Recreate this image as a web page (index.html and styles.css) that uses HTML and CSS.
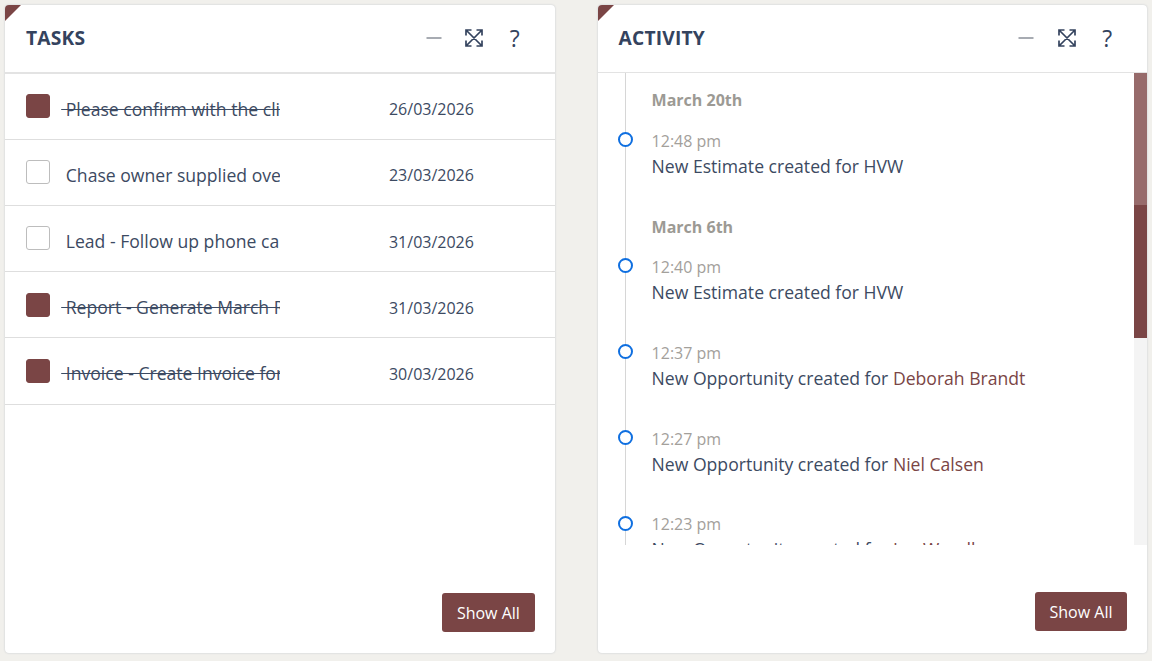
FILE: index.html
```html
<!DOCTYPE html>
<html lang="en">
<head>
    <meta charset="UTF-8">
    <meta name="viewport" content="width=device-width, initial-scale=1.0">
    <title>Dashboard</title>
    <link rel="stylesheet" href="styles.css">
</head>
<body>
    <div class="dashboard">
        <section class="card">
            <span class="corner"></span>
            <header class="card-header card-header-thick">
                <h2>TASKS</h2>
                <div class="tools">
                    <svg class="tool" viewBox="0 0 20 20"><path class="tool-dash" d="M2.500 10H17.500"/></svg>
                    <svg class="tool" viewBox="0 0 20 20"><path d="M2.500 2.500L17.500 17.500M17.500 2.500L2.500 17.500M2 7.500V2H7.500M12.500 2H18V7.500M2 12.500V18H7.500M12.500 18H18V12.500"/></svg>
                    <span class="tool-help">?</span>
                </div>
            </header>
            <ul class="task-list">
                <li class="task task-done">
                    <span class="check"></span>
                    <span class="task-name"><span>&nbsp;Please confirm with the client the details</span></span>
                    <span class="task-date">26/03/2026</span>
                </li>
                <li class="task">
                    <span class="check"></span>
                    <span class="task-name"><span>&nbsp;Chase owner supplied overlay</span></span>
                    <span class="task-date">23/03/2026</span>
                </li>
                <li class="task">
                    <span class="check"></span>
                    <span class="task-name"><span>&nbsp;Lead - Follow up phone call</span></span>
                    <span class="task-date">31/03/2026</span>
                </li>
                <li class="task task-done">
                    <span class="check"></span>
                    <span class="task-name"><span>&nbsp;Report - Generate March Report</span></span>
                    <span class="task-date">31/03/2026</span>
                </li>
                <li class="task task-done">
                    <span class="check"></span>
                    <span class="task-name"><span>&nbsp;Invoice - Create Invoice for March</span></span>
                    <span class="task-date">30/03/2026</span>
                </li>
            </ul>
            <footer class="card-footer"><button class="btn">Show All</button></footer>
        </section>

        <section class="card">
            <span class="corner"></span>
            <header class="card-header">
                <h2>ACTIVITY</h2>
                <div class="tools">
                    <svg class="tool" viewBox="0 0 20 20"><path class="tool-dash" d="M2.500 10H17.500"/></svg>
                    <svg class="tool" viewBox="0 0 20 20"><path d="M2.500 2.500L17.500 17.500M17.500 2.500L2.500 17.500M2 7.500V2H7.500M12.500 2H18V7.500M2 12.500V18H7.500M12.500 18H18V12.500"/></svg>
                    <span class="tool-help">?</span>
                </div>
            </header>
            <div class="activity">
                <div class="timeline">
                    <h3 class="day">March 20th</h3>
                    <div class="event">
                        <div class="time">12:48 pm</div>
                        <div>New Estimate created for HVW</div>
                    </div>
                    <h3 class="day day-next">March 6th</h3>
                    <div class="event">
                        <div class="time">12:40 pm</div>
                        <div>New Estimate created for HVW</div>
                    </div>
                    <div class="event">
                        <div class="time">12:37 pm</div>
                        <div>New Opportunity created for <a href="#">Deborah Brandt</a></div>
                    </div>
                    <div class="event">
                        <div class="time">12:27 pm</div>
                        <div>New Opportunity created for <a href="#">Niel Calsen</a></div>
                    </div>
                    <div class="event">
                        <div class="time">12:23 pm</div>
                        <div>New Opportunity created for <a href="#">Ian Woodley</a></div>
                    </div>
                </div>
                <div class="scrollbar">
                    <div class="thumb-hover"></div>
                    <div class="thumb"></div>
                </div>
            </div>
            <footer class="card-footer"><button class="btn">Show All</button></footer>
        </section>
    </div>
</body>
</html>
```

FILE: styles.css
```css
*, *::before {
    box-sizing: border-box;
}

html, body {
    height: 100%;
}

body {
    margin: 0;
    overflow: hidden;
    background-color: #f1f0ec;
    font-family: "Open Sans", sans-serif;
    font-size: 16px;
    color: #3c4a62;
}

.dashboard {
    display: grid;
    grid-template-columns: 549.6px 549.6px;
    column-gap: 43px;
    padding: 5px 0 0 5px;
}

.card {
    position: relative;
    display: flex;
    flex-direction: column;
    height: 648px;
    background: white;
    border-radius: 4px;
    box-shadow: 0 0 2px rgba(60, 70, 110, 0.25);
    overflow: hidden;
}

.corner {
    position: absolute;
    top: 0;
    left: 0;
    width: 0;
    height: 0;
    border-top: 16px solid #7a4545;
    border-right: 16px solid transparent;
}

.card-header {
    display: flex;
    justify-content: space-between;
    align-items: center;
    height: 68px;
    padding: 0 30px 2px 21px;
    border-bottom: 1px solid #e3e3e3;
}

.card-header-thick {
    height: 69px;
    border-bottom-width: 2px;
}

.card-header h2 {
    margin: 0;
    font-size: 19.2px;
    font-weight: 700;
    letter-spacing: 0.2px;
    color: #34435e;
}

.tools {
    display: flex;
    align-items: center;
    gap: 20.5px;
}

.tool {
    width: 20px;
    height: 20px;
    fill: none;
    stroke: #34435e;
    stroke-width: 1.700;
}

.tool .tool-dash {
    stroke: #8a8f98;
    stroke-width: 1.500;
}

.tool-help {
    width: 20px;
    text-align: center;
    font-size: 23px;
    line-height: 20px;
    color: #34435e;
}

.task-list {
    flex: 1;
    list-style: none;
    margin: 0;
    padding: 0;
}

.task {
    display: flex;
    align-items: center;
    height: 66.12px;
    padding-left: 21px;
    border-bottom: 1px solid #dedede;
}

.check {
    flex: none;
    width: 24px;
    height: 24px;
    margin-top: -0.6px;
    border: 1px solid #bdbdbd;
    border-radius: 3px;
}

.task-done .check {
    background: #7a4545;
    border-color: #7a4545;
}

.task-name {
    width: 218.4px;
    margin: 4px 0 0 11.2px;
    overflow: hidden;
    white-space: nowrap;
    font-size: 17.6px;
}

.task-done .task-name span {
    text-decoration: line-through;
}

.task-date {
    margin: 5.6px 0 0 109.4px;
    font-size: 16px;
}

.card-footer {
    display: flex;
    justify-content: flex-end;
    padding: 0 20px 21px 0;
}

.btn {
    width: 92.4px;
    height: 39px;
    padding: 0;
    background-color: #7a4545;
    border: none;
    border-radius: 3px;
    color: white;
    font-family: inherit;
    font-size: 16px;
}

.activity {
    display: flex;
    height: 472px;
    flex: none;
    margin-bottom: 47px;
}

.timeline {
    flex: 1;
    position: relative;
    overflow: hidden;
    padding-left: 54px;
    font-size: 17.6px;
    background: linear-gradient(#d6d6d6, #d6d6d6) 27px 0 / 1px 100% no-repeat;
}

.day {
    margin: 15px 0 0 0;
    font-size: 16px;
    font-weight: 700;
    line-height: 24px;
    color: #9c9a94;
}

.day-next {
    margin-top: 36px;
}

.event {
    position: relative;
    margin-top: 17px;
    line-height: 25px;
}

.day-next + .event {
    margin-top: 16px;
}

.event + .event {
    margin-top: 35.8px;
}

.event::before {
    content: "";
    position: absolute;
    top: 3.4px;
    left: -34px;
    width: 15px;
    height: 15px;
    background: white;
    border: 2px solid #0f6fe0;
    border-radius: 50%;
}

.time {
    font-size: 16px;
    color: #a3a09b;
}

.event a {
    color: #7a4545;
    text-decoration: none;
}

.scrollbar {
    flex: none;
    width: 13px;
    background: #f4f4f4;
}

.thumb-hover {
    height: 132px;
    background: #976b6b;
}

.thumb {
    height: 133px;
    background: #7a4545;
}
```
